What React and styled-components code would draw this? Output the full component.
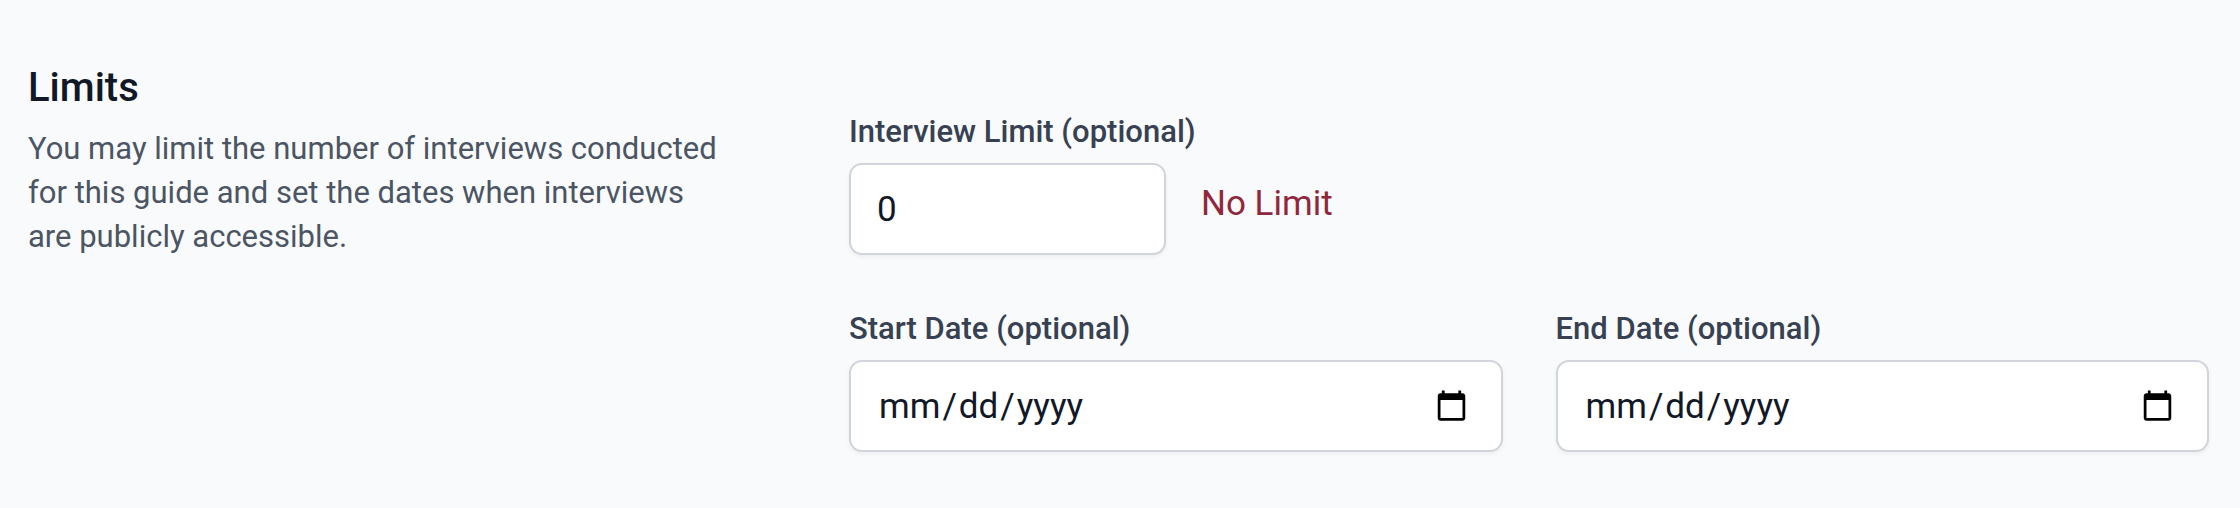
import React from 'react';
import styled, { createGlobalStyle } from 'styled-components';

const GlobalStyle = createGlobalStyle`
    *, *::before, *::after {
        box-sizing: border-box;
    }
    body {
        margin: 0;
        background-color: #f9fafc;
        color: #111827;
        font-family: Roboto, sans-serif;
        font-size: 35px;
        line-height: 53px;
    }
`;

const Section = styled.section`
    display: grid;
    grid-template-columns: 768fr 1360fr;
    column-gap: 53px;
    padding: 61px 31px 56px 28px;
`;

const Intro = styled.div`
    padding-right: 70px;
`;

const Title = styled.h3`
    margin: 0;
    font-size: 40px;
    font-weight: 500;
    line-height: 53px;
`;

const Description = styled.p`
    margin: 13px 0 0;
    color: #4b5563;
    font-size: 31px;
    line-height: 44px;
`;

const Fields = styled.div`
    display: grid;
    grid-template-columns: 1fr 1fr;
    gap: 52px 53px;
    padding-top: 49px;
`;

const Field = styled.div`
    grid-column: ${({ $wide }) => ($wide ? '1 / -1' : 'auto')};
`;

const Label = styled.label`
    display: block;
    margin-bottom: 9px;
    color: #374151;
    font-size: 31px;
    font-weight: 500;
    line-height: 44px;
`;

const InputRow = styled.div`
    display: flex;
    align-items: flex-start;
    gap: 35px;
`;

const Input = styled.input`
    display: block;
    width: ${({ $width }) => $width || '100%'};
    height: 92px;
    margin: 0;
    padding: 0 26px;
    border: 2px solid #d1d5db;
    border-radius: 13px;
    background-color: #ffffff;
    box-shadow: 0 2px 4px rgba(0, 0, 0, 0.05);
    color: #111827;
    font-family: inherit;
    font-size: 35px;
    line-height: 53px;

    &::-webkit-inner-spin-button {
        opacity: 0;
    }
`;

const DateInput = styled(Input)`
    &::-webkit-datetime-edit-month-field,
    &::-webkit-datetime-edit-day-field,
    &::-webkit-datetime-edit-year-field {
        padding: 0 2px;
    }
    &::-webkit-calendar-picker-indicator {
        margin: 0 4px 0 48px;
    }
`;

const Hint = styled.span`
    padding-top: 14px;
    color: #91273b;
`;

const App = () => (
    <>
        <GlobalStyle />
        <Section>
            <Intro>
                <Title>Limits</Title>
                <Description>
                    You may limit the number of interviews conducted for this guide and set the
                    dates when interviews are publicly accessible.
                </Description>
            </Intro>
            <Fields>
                <Field $wide>
                    <Label htmlFor="interview-limit">Interview Limit (optional)</Label>
                    <InputRow>
                        <Input id="interview-limit" type="number" min="0" defaultValue="0" $width="317px" />
                        <Hint>No Limit</Hint>
                    </InputRow>
                </Field>
                <Field>
                    <Label htmlFor="start-date">Start Date (optional)</Label>
                    <DateInput id="start-date" type="date" />
                </Field>
                <Field>
                    <Label htmlFor="end-date">End Date (optional)</Label>
                    <DateInput id="end-date" type="date" />
                </Field>
            </Fields>
        </Section>
    </>
);

export default App;
